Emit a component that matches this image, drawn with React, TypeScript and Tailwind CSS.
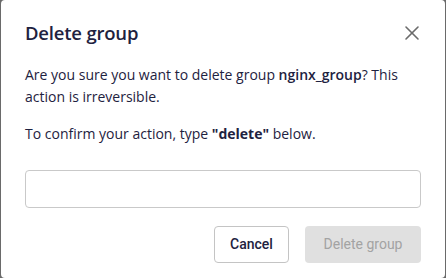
import React from 'react';

export default function App() {
  return (
    <div className="w-[446px] h-[278px] bg-[#6a6a6a] px-px overflow-hidden">
      <div
        className="h-full bg-white rounded-[4px] flex flex-col px-6 pt-[19px] text-[#1e2240]"
        style={{ fontFamily: '"Open Sans", "Noto Sans", sans-serif' }}
      >
        <div className="flex items-center justify-between h-[28px]">
          <h1 className="text-[18.5px] font-semibold leading-[28px] tracking-[-0.2px]">Delete group</h1>
          <button className="w-6 h-6 flex items-center justify-center text-[#6b6b6b] -mr-[3px]">
            <svg width="16" height="16" viewBox="0 0 16 16" fill="none" stroke="currentColor" strokeWidth="1.6" strokeLinecap="round">
              <line x1="2" y1="2" x2="14" y2="14" />
              <line x1="14" y1="2" x2="2" y2="14" />
            </svg>
          </button>
        </div>
        <p className="mt-[17px] text-[14px] leading-[22px]">
          Are you sure you want to delete group <span className="font-semibold">nginx_group</span>? This action is irreversible.
        </p>
        <p className="mt-[15px] text-[14px] leading-[22px]">
          To confirm your action, type <span className="font-bold">"delete"</span> below.
        </p>
        <input
          className="mt-[25px] h-[38px] w-full rounded-[4px] border border-[#c9c9c9] outline-none px-3 text-[14px]"
        />
        <div className="mt-[18px] flex justify-end gap-4" style={{ fontFamily: 'Roboto, sans-serif' }}>
          <button className="h-[37px] w-[75px] rounded-[4px] border border-[#c4c4c4] text-[14px] font-medium text-[#1e2240]">
            Cancel
          </button>
          <button className="h-[37px] w-[116px] rounded-[4px] bg-[#e0e0e0] text-[14px] text-[#a3a3a3]">
            Delete group
          </button>
        </div>
      </div>
    </div>
  );
}
